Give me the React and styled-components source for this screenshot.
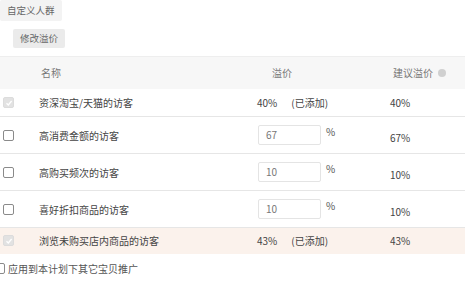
import styled, { createGlobalStyle } from "styled-components";

const GlobalStyle = createGlobalStyle`
  body {
    margin: 0;
    background: #fff;
    font-family: "Noto Sans CJK SC", "Liberation Sans", sans-serif;
    font-size: 10px;
    color: #444;
  }
`;

const rows = [
  { name: "资深淘宝/天猫的访客", value: "40", added: true, suggest: "40%", h: 28 },
  { name: "高消费金额的访客", value: "67", suggest: "67%", h: 37 },
  { name: "高购买频次的访客", value: "10", suggest: "10%", h: 37 },
  { name: "喜好折扣商品的访客", value: "10", suggest: "10%", h: 37 },
  { name: "浏览未购买店内商品的访客", value: "43", added: true, suggest: "43%", highlight: true, h: 26 },
];

const Page = styled.div`
  width: 465px;
  display: flex;
  flex-direction: column;
`;

const TopButton = styled.div`
  align-self: flex-start;
  height: ${({ $h }) => $h || 21}px;
  line-height: ${({ $h }) => $h || 21}px;
  padding: 0 7px;
  font-size: 9.5px;
  margin-left: ${({ $indent }) => $indent || 0}px;
  margin-top: ${({ $top }) => $top || 0}px;
  background: ${({ $dark }) => ($dark ? "#ebebeb" : "#f3f3f3")};
  color: #666;
  border-radius: 2px;
`;

const Table = styled.div`
  margin-top: 8px;
  border-top: 1px solid #eee;
`;

const Row = styled.div`
  display: grid;
  grid-template-columns: 32px 225px 133px 1fr;
  align-items: center;
  box-sizing: border-box;
  height: ${({ $h }) => $h}px;
  background: ${({ $bg }) => $bg || "#fff"};
  border-bottom: 1px solid ${({ $line }) => $line || "#e6e6e6"};
`;

const Cell = styled.div`
  padding-left: ${({ $pl }) => $pl || 0}px;
  display: flex;
  align-items: center;
  color: ${({ $muted }) => ($muted ? "#777" : "#444")};
  padding-top: ${({ $pt }) => $pt || 0}px;
`;

const Box = styled.span`
  width: 11px;
  height: 11px;
  box-sizing: border-box;
  border-radius: 2px;
  border: 1px solid ${({ $disabled }) => ($disabled ? "#dcdcdc" : "#8a8a8a")};
  background: ${({ $disabled }) => ($disabled ? "#e2e2e2" : "#fff")};
  display: inline-flex;
  align-items: center;
  justify-content: center;
  margin-left: ${({ $ml }) => $ml || 0}px;
  flex: none;
`;

const Input = styled.div`
  width: 63px;
  height: 20px;
  box-sizing: border-box;
  border: 1px solid #e4e4e4;
  border-radius: 2px;
  padding-left: 7px;
  line-height: 18px;
  color: #777;
`;

const Percent = styled.span`
  margin-left: 5px;
  align-self: flex-start;
  margin-top: -1px;
  color: #555;
`;

const Added = styled.span`
  margin-left: 14px;
`;

const Info = styled.span`
  display: inline-block;
  width: 8px;
  height: 8px;
  border-radius: 50%;
  background: #d0d0d0;
  margin-left: 5px;
`;

const Footer = styled.label`
  display: flex;
  align-items: center;
  margin-top: 7px;
  color: #555;
  gap: 3px;
`;

function Checkbox({ checked, disabled, ml }) {
  return (
    <Box $disabled={disabled} $ml={ml}>
      {checked && (
        <svg width="8" height="8" viewBox="0 0 8 8">
          <path d="M1.5 4.2 L3.3 6 L6.6 2" fill="none" stroke="#fff" strokeWidth="1.3" />
        </svg>
      )}
    </Box>
  );
}

export default function App() {
  return (
    <Page>
      <GlobalStyle />
      <TopButton>自定义人群</TopButton>
      <TopButton $dark $indent={13} $top={8} $h={19}>修改溢价</TopButton>
      <Table>
        <Row $h={32} $bg="#f7f7f7" $line="#f7f7f7">
          <Cell />
          <Cell $pl={9} $muted>名称</Cell>
          <Cell $pl={15} $muted>溢价</Cell>
          <Cell $pl={3} $muted>
            建议溢价
            <Info />
          </Cell>
        </Row>
        {rows.map((r) => (
          <Row
            key={r.name}
            $h={r.h}
            $bg={r.highlight ? "#fbf2ec" : "#fff"}
            $line={r.highlight ? "#fbf2ec" : "#e6e6e6"}
          >
            <Cell $pl={3}>
              <Checkbox checked={r.added} disabled={r.added} />
            </Cell>
            <Cell $pl={7}>{r.name}</Cell>
            {r.added ? (
              <Cell>
                {r.value}%<Added>(已添加)</Added>
              </Cell>
            ) : (
              <Cell $pl={1}>
                <Input>{r.value}</Input>
                <Percent>%</Percent>
              </Cell>
            )}
            <Cell $pt={r.added ? 0 : 4}>{r.suggest}</Cell>
          </Row>
        ))}
      </Table>
      <Footer>
        <Checkbox ml={-6} />
        应用到本计划下其它宝贝推广
      </Footer>
    </Page>
  );
}
